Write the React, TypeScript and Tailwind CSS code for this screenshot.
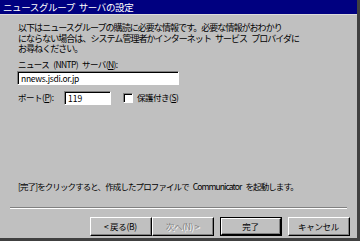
import React from 'react';

const font = { fontFamily: '"Noto Sans CJK JP", "Noto Sans", sans-serif' };

const Sp = () => <span className="inline-block w-[4px]" />;

const Btn = ({ label, disabled, isDefault }: any) => (
  <div className={isDefault ? 'w-[62px] h-[19px] border border-black' : 'w-[62px] h-[19px]'}>
    <div className="w-full h-full border-t border-l border-white border-b border-r border-b-black border-r-black">
      <div className="h-full flex items-center justify-center border-b border-r border-[#808080] text-[8.5px] leading-none tracking-[-0.3px]">
        <span className={disabled ? 'text-[#808080] [text-shadow:1px_1px_0_#fff]' : 'text-black'}>{label}</span>
      </div>
    </div>
  </div>
);

export default function App() {
  return (
    <div style={font} className="w-[360px] h-[241px] bg-[#c0c0c0] flex flex-col border-r-[3px] border-b-[3px] border-r-[#404040] border-b-[#404040] overflow-hidden text-black">
      <div className="h-[15px] bg-[#000080] text-white text-[9.5px] leading-[15px] pl-[3px] tracking-[-0.4px] border-b border-[#dcdcdc]">
        ニュースグループ<Sp />サーバの設定
      </div>

      <div className="flex-1 flex flex-col pl-[18px] pr-4 pt-[8px]">
        <div className="text-[9px] leading-[10.5px] tracking-[-0.95px]">
          <div className="h-[10.5px]">以下はニュースグループの購読に必要な情報です。必要な情報がおわかり</div>
          <div className="h-[10.5px]">にならない場合は、システム管理者かインターネット<Sp />サービス<Sp />プロバイダに</div>
          <div className="h-[10.5px]">お尋ねください。</div>
        </div>

        <div className="mt-[4px] text-[8.5px] leading-[11px] tracking-[-0.6px]">ニュース<Sp />(NNTP)<Sp />サーバ(<u>N</u>):</div>
        <div className="-ml-px mt-[1px] w-[162px] h-[14px] bg-white border-t border-l border-[#808080] border-b border-r border-b-white border-r-white">
          <div className="h-full border-t border-l border-black pl-[2px] text-[8.5px] leading-[11px] tracking-[-0.3px]">nnews.jsdi.or.jp</div>
        </div>

        <div className="flex items-center mt-[6px] h-[14px]">
          <div className="w-[46px] text-[8.5px] tracking-[-0.5px]">ポート(<u>P</u>):</div>
          <div className="w-[47px] h-[14px] bg-white border-t border-l border-[#808080] border-b border-r border-b-white border-r-white">
            <div className="h-full border-t border-l border-black pl-[2px] text-[8.5px] leading-[11px]">119</div>
          </div>
          <div className="ml-[12px] w-[10px] h-[10px] bg-white border-t border-l border-[#808080] border-b border-r border-b-white border-r-white">
            <div className="w-full h-full border-t border-l border-black" />
          </div>
          <div className="ml-[4px] text-[8.5px] tracking-[-0.5px]">保護付き(<u>S</u>)</div>
        </div>

        <div className="mt-auto mb-[15px] text-[8.5px] leading-[11px] tracking-[-0.9px]">
          [完了]をクリックすると、作成したプロファイルで<Sp />Communicator<Sp />を起動します。
        </div>
      </div>

      <div className="mx-[10px] border-t border-b border-t-[#808080] border-b-white" />

      <div className="flex justify-end items-center pr-[7px] pt-[8px] pb-[2px]">
        <Btn label="< 戻る(B)" />
        <Btn label="次へ(N) >" disabled />
        <div className="w-[6px]" />
        <Btn label="完了" isDefault />
        <div className="w-[6px]" />
        <Btn label="キャンセル" />
      </div>
    </div>
  );
}
